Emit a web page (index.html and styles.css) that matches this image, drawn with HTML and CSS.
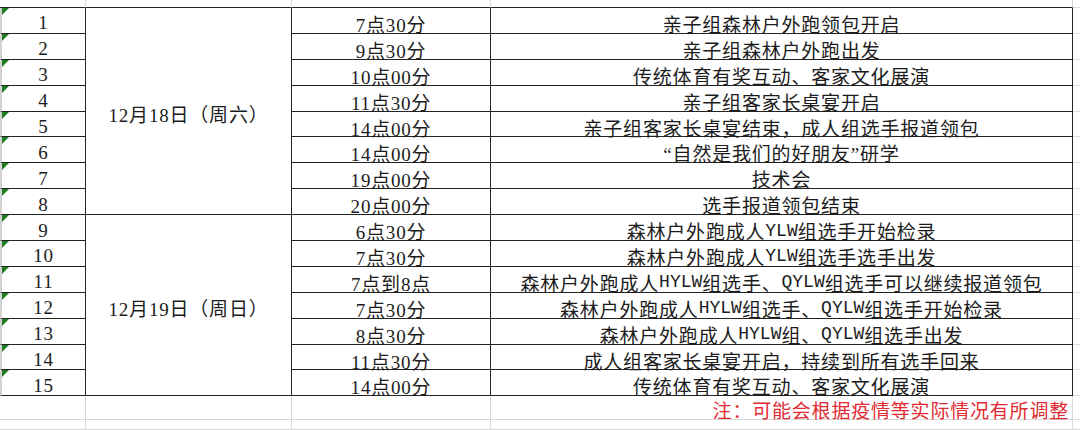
FILE: index.html
```html
<!DOCTYPE html>
<html lang="zh-CN">
<head>
<meta charset="utf-8">
<title>活动日程</title>
<link rel="stylesheet" href="styles.css">
</head>
<body>
<div class="sheet">
  <div class="c top"></div><div class="c top"></div><div class="c top"></div><div class="c top"></div><div class="c top e"></div>

  <div class="c n">1</div><div class="c d s8">12月18日（周六）</div><div class="c t">7点30分</div><div class="c ev">亲子组森林户外跑领包开启</div><div class="c e"></div>
  <div class="c n">2</div><div class="c t">9点30分</div><div class="c ev">亲子组森林户外跑出发</div><div class="c e"></div>
  <div class="c n">3</div><div class="c t">10点00分</div><div class="c ev">传统体育有奖互动、客家文化展演</div><div class="c e"></div>
  <div class="c n">4</div><div class="c t">11点30分</div><div class="c ev">亲子组客家长桌宴开启</div><div class="c e"></div>
  <div class="c n">5</div><div class="c t">14点00分</div><div class="c ev">亲子组客家长桌宴结束，成人组选手报道领包</div><div class="c e"></div>
  <div class="c n">6</div><div class="c t">14点00分</div><div class="c ev">“自然是我们的好朋友”研学</div><div class="c e"></div>
  <div class="c n">7</div><div class="c t">19点00分</div><div class="c ev">技术会</div><div class="c e"></div>
  <div class="c n">8</div><div class="c t">20点00分</div><div class="c ev">选手报道领包结束</div><div class="c e"></div>

  <div class="c n">9</div><div class="c d s7">12月19日（周日）</div><div class="c t">6点30分</div><div class="c ev">森林户外跑成人<span class="lat">YLW</span>组选手开始检录</div><div class="c e"></div>
  <div class="c n">10</div><div class="c t">7点30分</div><div class="c ev">森林户外跑成人<span class="lat">YLW</span>组选手选手出发</div><div class="c e"></div>
  <div class="c n">11</div><div class="c t">7点到8点</div><div class="c ev">森林户外跑成人<span class="lat">HYLW</span>组选手、<span class="lat">QYLW</span>组选手可以继续报道领包</div><div class="c e"></div>
  <div class="c n">12</div><div class="c t">7点30分</div><div class="c ev">森林户外跑成人<span class="lat">HYLW</span>组选手、<span class="lat">QYLW</span>组选手开始检录</div><div class="c e"></div>
  <div class="c n">13</div><div class="c t">8点30分</div><div class="c ev">森林户外跑成人<span class="lat">HYLW</span>组、<span class="lat">QYLW</span>组选手出发</div><div class="c e"></div>
  <div class="c n">14</div><div class="c t">11点30分</div><div class="c ev">成人组客家长桌宴开启，持续到所有选手回来</div><div class="c e"></div>
  <div class="c n">15</div><div class="c t">14点00分</div><div class="c ev">传统体育有奖互动、客家文化展演</div><div class="c e"></div>

  <div class="c g"></div><div class="c g"></div><div class="c g"></div><div class="c g note">注：可能会根据疫情等实际情况有所调整</div><div class="c g e"></div>
  <div class="c g"></div><div class="c g"></div><div class="c g"></div><div class="c g"></div><div class="c g e"></div>
</div>
</body>
</html>
```
FILE: styles.css
```css
html, body {
  margin: 0;
  padding: 0;
  background: #ffffff;
}

.sheet {
  width: 1080px;
  height: 430px;
  overflow: hidden;
  display: grid;
  grid-template-columns: 86px 206px 199px 582px 1fr;
  grid-template-rows: 8px repeat(15, 25.9px) 24px 1fr;
  font-family: "Liberation Serif", "Noto Sans CJK SC", serif;
  font-size: 19px;
  letter-spacing: 0.8px;
  color: #1c1c1c;
}

.c {
  box-sizing: border-box;
  display: flex;
  align-items: center;
  justify-content: center;
  padding-top: 6px;
  white-space: nowrap;
  border-right: 1px solid #222222;
  border-bottom: 1px solid #222222;
  position: relative;
}

.top {
  border-right-color: #d8d8d8;
  padding-top: 0;
}

.e {
  border-right: none;
  border-bottom-color: #dcdcdc;
}

.n {
  border-left: 2px solid #d2d2d2;
}

.n::before {
  content: "";
  position: absolute;
  top: 0;
  left: 0;
  width: 0;
  height: 0;
  border-top: 7px solid #1f7d1f;
  border-right: 7px solid transparent;
}

.s8 {
  grid-row: span 8;
}

.s7 {
  grid-row: span 7;
}

.d {
  padding-top: 4px;
}

.lat {
  font-family: "Liberation Mono", monospace;
  font-size: 18px;
  letter-spacing: 0;
}

.g {
  border-right-color: #d8d8d8;
  border-bottom-color: #d8d8d8;
}

.g:first-child {
  border-left: 2px solid #d2d2d2;
}

.note {
  justify-content: flex-end;
  padding-top: 4px;
  padding-right: 3px;
  color: #e22a32;
  overflow: visible;
}
```
